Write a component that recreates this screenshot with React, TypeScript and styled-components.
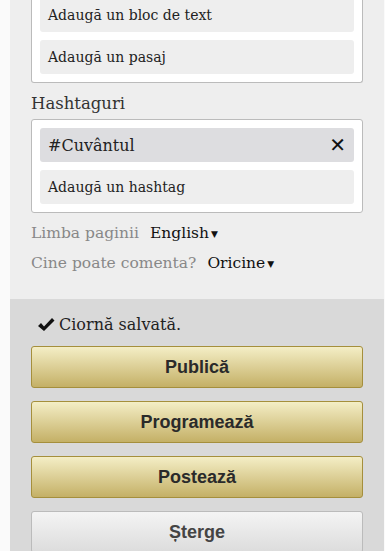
import React from 'react';
import styled, { createGlobalStyle } from 'styled-components';

const GlobalStyle = createGlobalStyle`
  html, body {
    margin: 0;
    padding: 0;
    background: #fafafa;
    overflow: hidden;
  }
  body {
    font-family: "DejaVu Serif", Georgia, serif;
  }
`;

const Panel = styled.div`
  margin-left: 10px;
  width: 374px;
  margin-top: -2px;
`;

const Upper = styled.section`
  background: #eeeeee;
  padding: 0 21px 21px 21px;
`;

const Box = styled.div`
  background: #fff;
  border: 1px solid #bbbbbb;
  border-radius: 3px;
  padding: 0 8px 8px 8px;
  display: flex;
  flex-direction: column;
  gap: 8px;
`;

const TopBox = styled(Box)`
  border-top: none;
  border-radius: 0 0 3px 3px;
`;

const FramedBox = styled(Box)`
  padding-top: 8px;
`;

const Item = styled.div<{ $active?: boolean }>`
  background: ${(p) => (p.$active ? '#dddde0' : '#eeeeee')};
  border-radius: 3px;
  height: 34px;
  display: flex;
  align-items: center;
  justify-content: space-between;
  padding: 0 8px;
  font-size: ${(p) => (p.$active ? '16px' : '14px')};
  color: #222;
`;

const Close = styled.span`
  font-family: "DejaVu Sans", sans-serif;
  font-size: 20px;
  color: #111;
`;

const Label = styled.div`
  font-size: 16.5px;
  color: #333;
  margin: 11px 0 6px 0;
`;

const Setting = styled.div`
  display: flex;
  align-items: baseline;
  gap: 11px;
  font-size: 15.5px;
  height: 30px;
  line-height: 30px;
`;

const SettingName = styled.span`
  color: #888;
`;

const SettingValue = styled.span`
  color: #111;
  display: inline-flex;
  align-items: baseline;
`;

const Caret = styled.span`
  font-family: "DejaVu Sans", sans-serif;
  font-size: 9px;
  margin-left: 2px;
  position: relative;
  top: -1px;
`;

const Settings = styled.div`
  margin-top: 5px;
`;

const Lower = styled.section`
  background: #d9d9d9;
  padding: 16px 21px 0 21px;
  height: 260px;
  display: flex;
  flex-direction: column;
  gap: 13px;
`;

const Saved = styled.div`
  display: flex;
  align-items: center;
  gap: 4px;
  font-size: 16px;
  color: #222;
  margin-left: 6px;
  margin-bottom: -1px;
`;

const Button = styled.button<{ $plain?: boolean }>`
  width: 100%;
  height: 42px;
  flex: none;
  border-radius: 3px;
  border: 1px solid ${(p) => (p.$plain ? '#bbbbbb' : '#a58f3c')};
  background: ${(p) =>
    p.$plain
      ? 'linear-gradient(to bottom, #f4f4f4, #dcdcdc)'
      : 'linear-gradient(to bottom, #f4eec6, #c4b066)'};
  font-family: "Liberation Sans", Arial, sans-serif;
  font-weight: bold;
  font-size: 18px;
  color: ${(p) => (p.$plain ? '#444' : '#2a2a2a')};
  padding: 0;
`;

const Check = () => (
  <svg width="18" height="16" viewBox="0 0 18 16">
    <path d="M1 9 L4 6 L7 9.5 L15 1 L17.5 3.5 L7 14 Z" fill="#111" />
  </svg>
);

export default function App() {
  return (
    <Panel>
      <GlobalStyle />
      <Upper>
        <TopBox>
          <Item>Adaugă un bloc de text</Item>
          <Item>Adaugă un pasaj</Item>
        </TopBox>
        <Label>Hashtaguri</Label>
        <FramedBox>
          <Item $active>
            #Cuvântul
            <Close>✕</Close>
          </Item>
          <Item>Adaugă un hashtag</Item>
        </FramedBox>
        <Settings>
          <Setting>
            <SettingName>Limba paginii</SettingName>
            <SettingValue>
              English<Caret>▼</Caret>
            </SettingValue>
          </Setting>
          <Setting>
            <SettingName>Cine poate comenta?</SettingName>
            <SettingValue>
              Oricine<Caret>▼</Caret>
            </SettingValue>
          </Setting>
        </Settings>
      </Upper>
      <Lower>
        <Saved>
          <Check />
          Ciornă salvată.
        </Saved>
        <Button>Publică</Button>
        <Button>Programează</Button>
        <Button>Postează</Button>
        <Button $plain>Șterge</Button>
      </Lower>
    </Panel>
  );
}
